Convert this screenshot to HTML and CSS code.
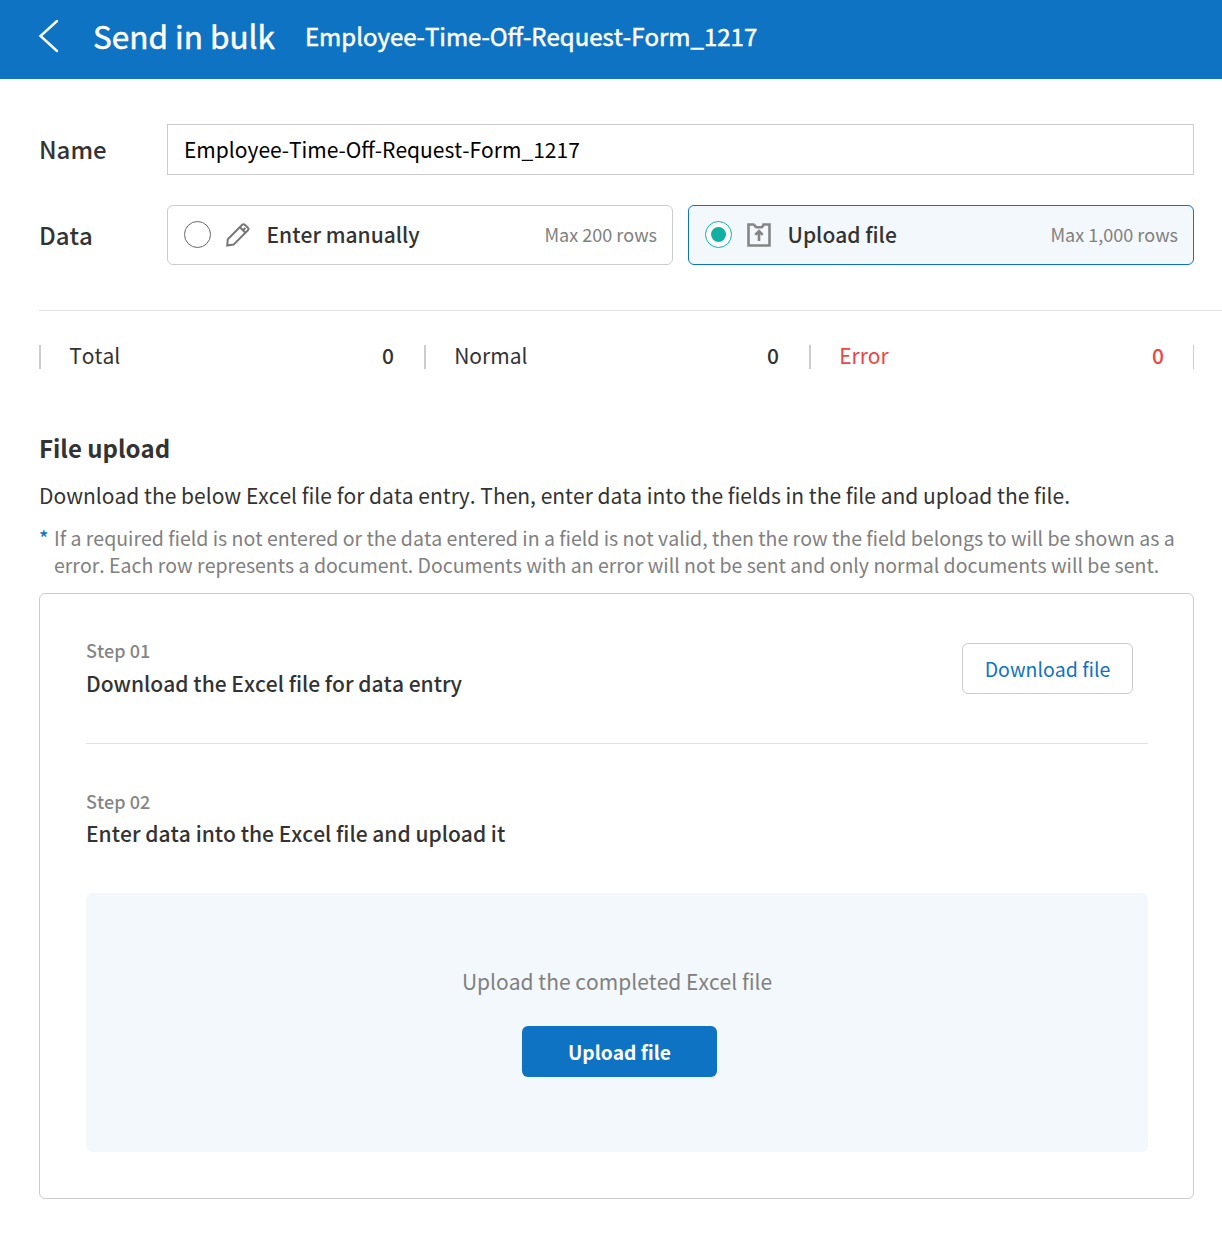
FILE: index.html
```html
<!DOCTYPE html>
<html lang="en">
<head>
<meta charset="utf-8">
<title>Send in bulk</title>
<link rel="stylesheet" href="styles.css">
</head>
<body>
<header class="topbar">
  <svg class="back" width="22" height="36" viewBox="0 0 22 36"><path d="M19 3 L2.5 18 L19 33"/></svg>
  <h1 class="title"><span>Send in bulk</span></h1>
  <span class="doc-name">Employee-Time-Off-Request-Form_1217</span>
</header>
<main class="page">
  <section class="form">
    <label class="label">Name</label>
    <div class="input"><span>Employee-Time-Off-Request-Form_1217</span></div>
    <span class="label label-data">Data</span>
    <div class="options">
      <div class="option">
        <span class="radio"></span>
        <svg class="icon" width="26" height="26" viewBox="0 0 26 26"><path d="M2.2 23.6 L2.8 17.2 L17.2 2.8 Q18.5 1.6 19.8 2.8 L22.9 5.8 Q24.1 7 22.9 8.3 L8.6 22.6 Z M15 5.2 L20.4 10.8 M18.3 8 L20.4 6"/></svg>
        <span class="option-name">Enter manually</span>
        <span class="option-max">Max 200 rows</span>
      </div>
      <div class="option selected">
        <span class="radio"></span>
        <svg class="icon icon-upload" width="26" height="26" viewBox="0 0 26 26"><path d="M8.5 2.5 H2.5 V23.5 H23.5 V2.5 H17.5 Q17 5.2 15 5.2 H11 Q9 5.2 8.5 2.5 M13 19 V9.5 M9.3 12.8 L13 9 L16.7 12.8"/></svg>
        <span class="option-name">Upload file</span>
        <span class="option-max">Max 1,000 rows</span>
      </div>
    </div>
  </section>
  <section class="stats">
    <div class="stat"><span>Total</span><b>0</b></div>
    <div class="stat"><span>Normal</span><b>0</b></div>
    <div class="stat error"><span>Error</span><b>0</b></div>
  </section>
  <section class="upload">
    <h2 class="heading"><span>File upload</span></h2>
    <p class="intro"><span>Download the below Excel file for data entry. Then, enter data into the fields in the file and upload the file.</span></p>
    <div class="note"><span class="star">*</span><p class="note-text"><span>If a required field is not entered or the data entered in a field is not valid, then the row the field belongs to will be shown as a</span><br><span>error. Each row represents a document. Documents with an error will not be sent and only normal documents will be sent.</span></p></div>
    <div class="card">
      <div class="step step-one">
        <div>
          <div class="step-no">Step 01</div>
          <div class="step-title">Download the Excel file for data entry</div>
        </div>
        <button class="btn btn-outline">Download file</button>
      </div>
      <div class="step">
        <div>
          <div class="step-no">Step 02</div>
          <div class="step-title">Enter data into the Excel file and upload it</div>
        </div>
      </div>
      <div class="dropzone">
        <p class="drop-text">Upload the completed Excel file</p>
        <button class="btn btn-primary">Upload file</button>
      </div>
    </div>
  </section>
</main>
</body>
</html>
```
FILE: styles.css
```css
* { box-sizing: border-box; }
body, h1, h2, p { margin: 0; }
body {
  width: 1222px;
  background: #fff;
  color: #333;
  font-family: "Noto Sans CJK KR", "Noto Sans", sans-serif;
  font-size: 21px;
  font-kerning: none;
  overflow: hidden;
}
.topbar {
  display: flex;
  align-items: center;
  height: 79px;
  padding-left: 38px;
  background: #0f73c4;
  color: #fff;
  white-space: nowrap;
  -webkit-text-stroke: 0.5px #fff;
}
.back { fill: none; stroke: #fff; stroke-width: 2.4; stroke-linecap: round; margin-top: -8px; }
.title { margin: -9px 0 0 33px; font-size: 31.5px; font-weight: 400; line-height: 48px; }
.doc-name { margin: -7px 0 0 30px; font-size: 24px; line-height: 36px; }
.page { padding: 45px 0 0 39px; }
.form {
  display: grid;
  grid-template-columns: 128px 1027px;
  row-gap: 30px;
  align-items: center;
  padding-bottom: 45px;
  border-bottom: 1px solid #e3e3e3;
}
.label { padding-bottom: 2px; font-size: 24px; font-weight: 500; line-height: 36px; }
.label-data { padding-bottom: 0; }
.input {
  height: 51px;
  padding: 0 16px;
  border: 1px solid #ccc;
  color: #000;
  line-height: 49px;
}
.options { display: grid; grid-template-columns: 1fr 1fr; gap: 15px; line-height: 30px; }
.option {
  display: flex;
  align-items: center;
  height: 60px;
  padding: 0 15px 2px 16px;
  border: 1px solid #ccc;
  border-radius: 6px;
}
.selected { border-color: #0f73c4; background: #f3f8fc; }
.radio {
  display: grid;
  place-items: center;
  width: 27px;
  height: 27px;
  border: 1px solid #666;
  border-radius: 50%;
  background: #fff;
}
.selected .radio { border-color: #12b0a2; }
.selected .radio::after { content: ""; width: 15px; height: 15px; border-radius: 50%; background: #12b0a2; }
.icon { margin: 1px 15.5px 0 14px; fill: none; stroke: #777; stroke-width: 2; }
.icon-upload { stroke: #858585; stroke-width: 2.6; }
.option-name { font-weight: 500; }
.option-max { margin-left: auto; font-size: 18px; color: #808080; }
.stats { display: grid; grid-template-columns: 385px 385px 385px; padding-top: 34px; }
.stat {
  display: flex;
  justify-content: space-between;
  height: 24px;
  padding: 0 30px 0 28.2px;
  border-left: 2px solid #ccc;
  line-height: 21px;
}
.stat b { font-weight: 500; }
.error { padding-right: 29px; color: #f04444; border-right: 1px solid #ccc; border-left-color: #ccc; }
.upload { width: 1155px; padding-top: 61px; white-space: nowrap; }
.heading { font-size: 24px; font-weight: 700; line-height: 36px; }
.intro { margin-top: 13px; line-height: 32px; }
.note { display: flex; margin-top: 13px; font-size: 19.5px; line-height: 27px; color: #808080; }
.star { flex: none; width: 15px; color: #0f73c4; font-weight: 500; }
.card { height: 606px; margin-top: 15px; padding: 43px 45px 0 46px; border: 1px solid #ccc; border-radius: 6px; }
.step { display: flex; justify-content: space-between; }
.step-one { height: 107px; margin-bottom: 44px; padding-right: 15px; border-bottom: 1px solid #e3e3e3; }
.step-no { font-size: 18px; font-weight: 500; line-height: 26px; color: #858585; }
.step-title { margin-top: 3px; font-weight: 500; line-height: 32px; }
.step-one .step-title { margin-top: 4px; }
.btn { height: 51px; border-radius: 6px; font-family: inherit; font-size: 19.5px; font-kerning: none; padding: 0; }
.btn-outline { width: 171px; margin-top: 6px; border: 1px solid #ccc; background: #fff; color: #0f73c4; }
.btn-primary { width: 195px; margin-left: 5px; border: 0; background: #0f73c4; color: #fff; font-size: 19.2px; font-weight: 700; }
.dropzone { height: 259px; margin-top: 44px; padding-top: 72px; border-radius: 6px; background: #f3f8fc; text-align: center; }
.drop-text { margin-bottom: 29px; line-height: 32px; color: #808080; }
```
